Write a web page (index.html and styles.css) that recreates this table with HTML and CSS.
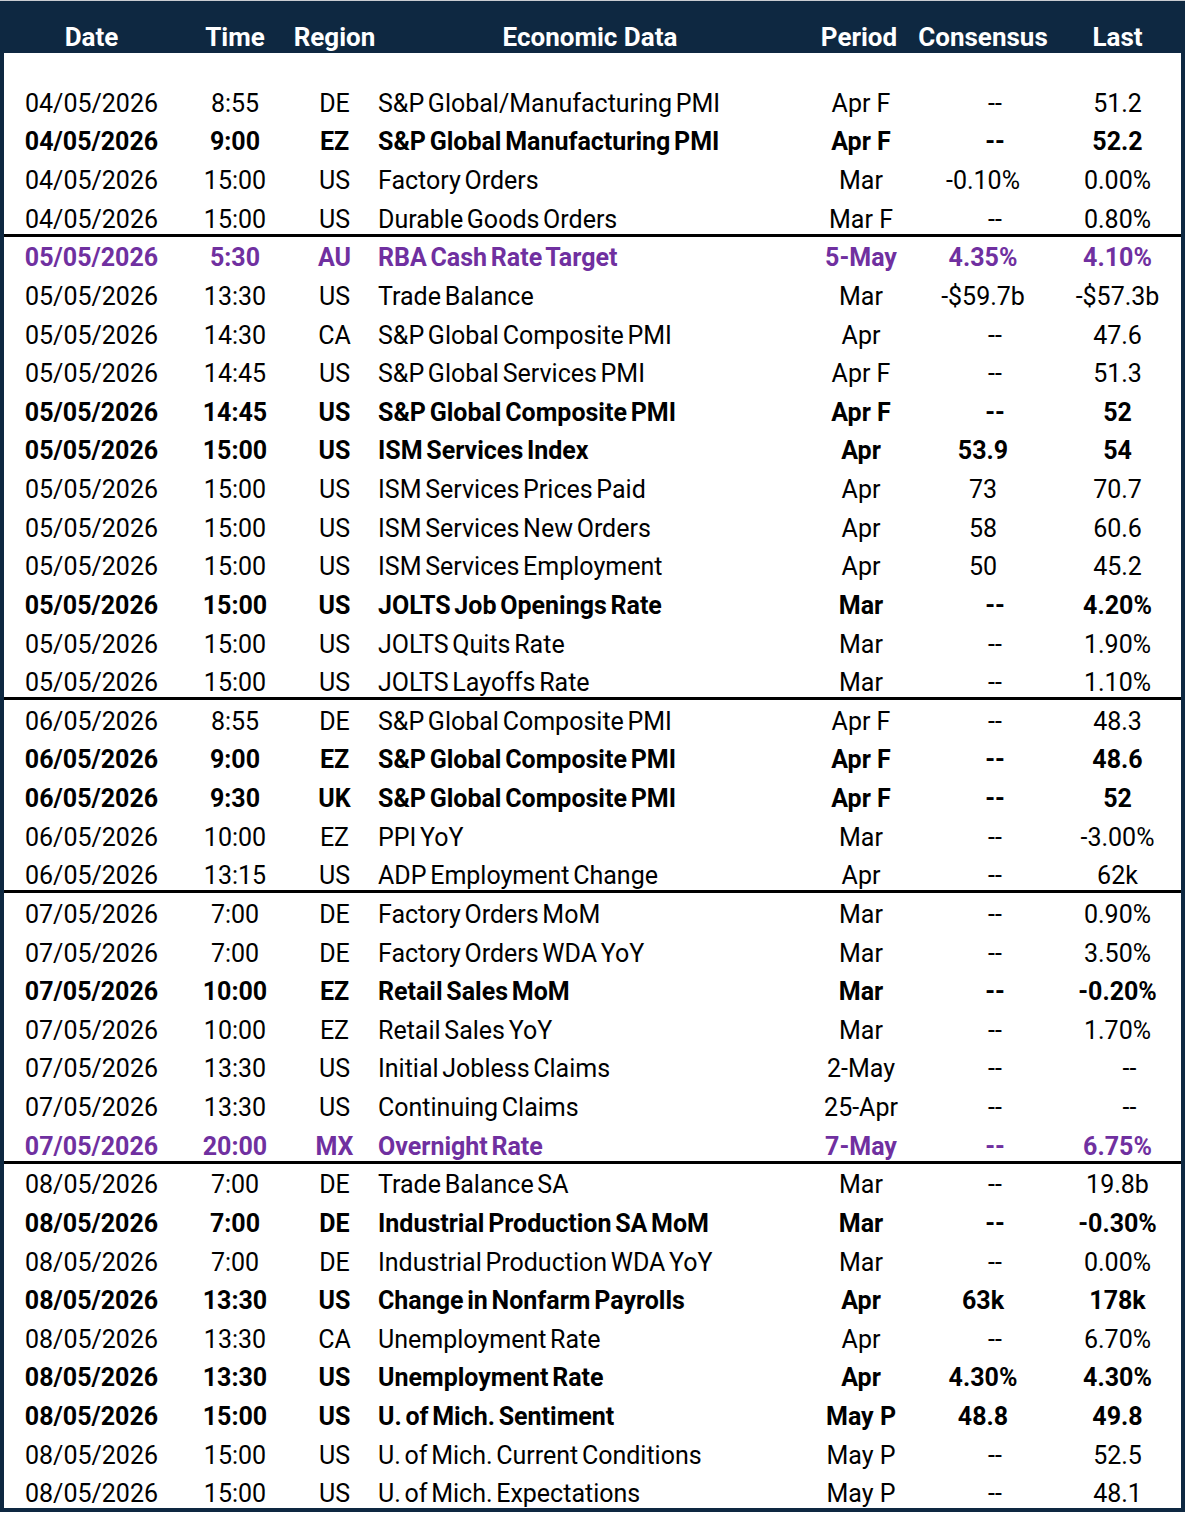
FILE: index.html
```html
<!DOCTYPE html>
<html>
  <head>
    <title>Economic Calendar</title>
    <link rel="stylesheet" href="styles.css">
  </head>
  <body>
    <div class="page">
      <div class="sheet">
        <div class="line head">
          <div>Date</div>
          <div>Time</div>
          <div>Region</div>
          <div class="center">Economic Data</div>
          <div>Period</div>
          <div>Consensus</div>
          <div class="last">Last</div>
        </div>
        <div class="spacer"></div>
        <div class="rows">
          <div class="line"><div>04/05/2026</div><div>8:55</div><div>DE</div><div class="name">S&amp;P Global/Manufacturing PMI</div><div class="period">Apr F</div><div class="na">--</div><div class="last">51.2</div></div>
          <div class="line bold"><div>04/05/2026</div><div>9:00</div><div>EZ</div><div class="name">S&amp;P Global Manufacturing PMI</div><div class="period">Apr F</div><div class="na">--</div><div class="last">52.2</div></div>
          <div class="line"><div>04/05/2026</div><div>15:00</div><div>US</div><div class="name">Factory Orders</div><div class="period">Mar</div><div>-0.10%</div><div class="last">0.00%</div></div>
          <div class="line sep"><div>04/05/2026</div><div>15:00</div><div>US</div><div class="name">Durable Goods Orders</div><div class="period">Mar F</div><div class="na">--</div><div class="last">0.80%</div></div>

          <div class="line bold purple"><div>05/05/2026</div><div>5:30</div><div>AU</div><div class="name">RBA Cash Rate Target</div><div class="period">5-May</div><div>4.35%</div><div class="last">4.10%</div></div>
          <div class="line"><div>05/05/2026</div><div>13:30</div><div>US</div><div class="name">Trade Balance</div><div class="period">Mar</div><div>-$59.7b</div><div class="last">-$57.3b</div></div>
          <div class="line"><div>05/05/2026</div><div>14:30</div><div>CA</div><div class="name">S&amp;P Global Composite PMI</div><div class="period">Apr</div><div class="na">--</div><div class="last">47.6</div></div>
          <div class="line"><div>05/05/2026</div><div>14:45</div><div>US</div><div class="name">S&amp;P Global Services PMI</div><div class="period">Apr F</div><div class="na">--</div><div class="last">51.3</div></div>
          <div class="line bold"><div>05/05/2026</div><div>14:45</div><div>US</div><div class="name">S&amp;P Global Composite PMI</div><div class="period">Apr F</div><div class="na">--</div><div class="last">52</div></div>
          <div class="line bold"><div>05/05/2026</div><div>15:00</div><div>US</div><div class="name">ISM Services Index</div><div class="period">Apr</div><div>53.9</div><div class="last">54</div></div>
          <div class="line"><div>05/05/2026</div><div>15:00</div><div>US</div><div class="name">ISM Services Prices Paid</div><div class="period">Apr</div><div>73</div><div class="last">70.7</div></div>
          <div class="line"><div>05/05/2026</div><div>15:00</div><div>US</div><div class="name">ISM Services New Orders</div><div class="period">Apr</div><div>58</div><div class="last">60.6</div></div>
          <div class="line"><div>05/05/2026</div><div>15:00</div><div>US</div><div class="name">ISM Services Employment</div><div class="period">Apr</div><div>50</div><div class="last">45.2</div></div>
          <div class="line bold"><div>05/05/2026</div><div>15:00</div><div>US</div><div class="name">JOLTS Job Openings Rate</div><div class="period">Mar</div><div class="na">--</div><div class="last">4.20%</div></div>
          <div class="line"><div>05/05/2026</div><div>15:00</div><div>US</div><div class="name">JOLTS Quits Rate</div><div class="period">Mar</div><div class="na">--</div><div class="last">1.90%</div></div>
          <div class="line sep"><div>05/05/2026</div><div>15:00</div><div>US</div><div class="name">JOLTS Layoffs Rate</div><div class="period">Mar</div><div class="na">--</div><div class="last">1.10%</div></div>

          <div class="line"><div>06/05/2026</div><div>8:55</div><div>DE</div><div class="name">S&amp;P Global Composite PMI</div><div class="period">Apr F</div><div class="na">--</div><div class="last">48.3</div></div>
          <div class="line bold"><div>06/05/2026</div><div>9:00</div><div>EZ</div><div class="name">S&amp;P Global Composite PMI</div><div class="period">Apr F</div><div class="na">--</div><div class="last">48.6</div></div>
          <div class="line bold"><div>06/05/2026</div><div>9:30</div><div>UK</div><div class="name">S&amp;P Global Composite PMI</div><div class="period">Apr F</div><div class="na">--</div><div class="last">52</div></div>
          <div class="line"><div>06/05/2026</div><div>10:00</div><div>EZ</div><div class="name">PPI YoY</div><div class="period">Mar</div><div class="na">--</div><div class="last">-3.00%</div></div>
          <div class="line sep"><div>06/05/2026</div><div>13:15</div><div>US</div><div class="name">ADP Employment Change</div><div class="period">Apr</div><div class="na">--</div><div class="last">62k</div></div>

          <div class="line"><div>07/05/2026</div><div>7:00</div><div>DE</div><div class="name">Factory Orders MoM</div><div class="period">Mar</div><div class="na">--</div><div class="last">0.90%</div></div>
          <div class="line"><div>07/05/2026</div><div>7:00</div><div>DE</div><div class="name">Factory Orders WDA YoY</div><div class="period">Mar</div><div class="na">--</div><div class="last">3.50%</div></div>
          <div class="line bold"><div>07/05/2026</div><div>10:00</div><div>EZ</div><div class="name">Retail Sales MoM</div><div class="period">Mar</div><div class="na">--</div><div class="last">-0.20%</div></div>
          <div class="line"><div>07/05/2026</div><div>10:00</div><div>EZ</div><div class="name">Retail Sales YoY</div><div class="period">Mar</div><div class="na">--</div><div class="last">1.70%</div></div>
          <div class="line"><div>07/05/2026</div><div>13:30</div><div>US</div><div class="name">Initial Jobless Claims</div><div class="period">2-May</div><div class="na">--</div><div class="last na">--</div></div>
          <div class="line"><div>07/05/2026</div><div>13:30</div><div>US</div><div class="name">Continuing Claims</div><div class="period">25-Apr</div><div class="na">--</div><div class="last na">--</div></div>
          <div class="line bold purple sep"><div>07/05/2026</div><div>20:00</div><div>MX</div><div class="name">Overnight Rate</div><div class="period">7-May</div><div class="na">--</div><div class="last">6.75%</div></div>

          <div class="line"><div>08/05/2026</div><div>7:00</div><div>DE</div><div class="name">Trade Balance SA</div><div class="period">Mar</div><div class="na">--</div><div class="last">19.8b</div></div>
          <div class="line bold"><div>08/05/2026</div><div>7:00</div><div>DE</div><div class="name">Industrial Production SA MoM</div><div class="period">Mar</div><div class="na">--</div><div class="last">-0.30%</div></div>
          <div class="line"><div>08/05/2026</div><div>7:00</div><div>DE</div><div class="name">Industrial Production WDA YoY</div><div class="period">Mar</div><div class="na">--</div><div class="last">0.00%</div></div>
          <div class="line bold"><div>08/05/2026</div><div>13:30</div><div>US</div><div class="name">Change in Nonfarm Payrolls</div><div class="period">Apr</div><div>63k</div><div class="last">178k</div></div>
          <div class="line"><div>08/05/2026</div><div>13:30</div><div>CA</div><div class="name">Unemployment Rate</div><div class="period">Apr</div><div class="na">--</div><div class="last">6.70%</div></div>
          <div class="line bold"><div>08/05/2026</div><div>13:30</div><div>US</div><div class="name">Unemployment Rate</div><div class="period">Apr</div><div>4.30%</div><div class="last">4.30%</div></div>
          <div class="line bold"><div>08/05/2026</div><div>15:00</div><div>US</div><div class="name">U. of Mich. Sentiment</div><div class="period">May P</div><div>48.8</div><div class="last">49.8</div></div>
          <div class="line"><div>08/05/2026</div><div>15:00</div><div>US</div><div class="name">U. of Mich. Current Conditions</div><div class="period">May P</div><div class="na">--</div><div class="last">52.5</div></div>
          <div class="line"><div>08/05/2026</div><div>15:00</div><div>US</div><div class="name">U. of Mich. Expectations</div><div class="period">May P</div><div class="na">--</div><div class="last">48.1</div></div>
        </div>
      </div>
    </div>
  </body>
</html>
```

FILE: styles.css
```css
body {
  margin: 0;
  background: #fff;
  font-family: Roboto, "Liberation Sans", sans-serif;
  color: #000;
}
.page {
  width: 1185px;
  border-top: 1px solid #c9ccd1;
}
.sheet {
  border: 4px solid #0e2841;
  border-top: 0;
  background: #fff;
}
.line {
  display: grid;
  grid-template-columns: 175px 112px 87px 424px 114px 134px 131px;
  align-items: center;
  box-sizing: border-box;
  height: 38.64px;
  padding-top: 5px;
  font-size: 25px;
  line-height: 28px;
  text-align: center;
  white-space: nowrap;
}
.line .name {
  text-align: left;
  word-spacing: -2.5px;
}
.line .period {
  padding-left: 4px;
}
.line .last {
  padding-left: 4px;
}
.line .na {
  padding-left: 24px;
}
.line .last.na {
  padding-left: 28px;
}
.head {
  height: 52px;
  padding-top: 20px;
  background: #0e2841;
  color: #fff;
  font-weight: 700;
  font-size: 26px;
}
.head .center {
  text-align: center;
}
.spacer {
  height: 29px;
}
.rows {
  height: 1426px;
  overflow: hidden;
}
.bold {
  font-weight: 700;
}
.purple {
  color: #7030a0;
}
/* thick rule closing each day */
.sep {
  box-shadow: inset 0 -3px 0 #000;
}
```
